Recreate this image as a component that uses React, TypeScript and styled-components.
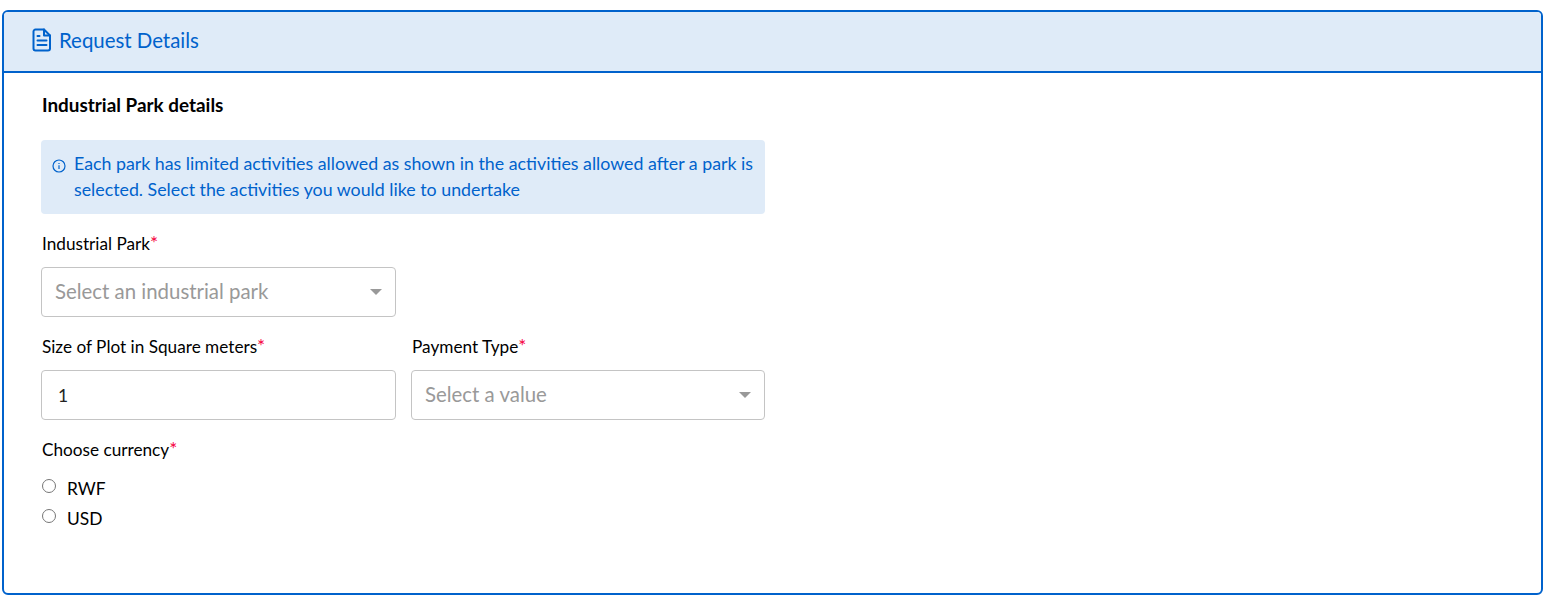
import React from 'react';
import styled, { createGlobalStyle } from 'styled-components';

const GlobalStyle = createGlobalStyle`
  html, body {
    margin: 0;
    padding: 0;
    background: #fff;
    font-family: 'Lato', 'Noto Sans', sans-serif;
    color: #000;
  }
`;

const Page = styled.div`
  padding: 10px 6px 3px 2px;
`;

const Card = styled.section`
  height: 585px;
  box-sizing: border-box;
  border: 2px solid #0062cc;
  border-radius: 6px;
  overflow: hidden;
`;

const CardHeader = styled.header`
  display: flex;
  align-items: center;
  gap: 7px;
  height: 61px;
  box-sizing: border-box;
  padding: 0 0 4px 28px;
  background: #dfebf8;
  border-bottom: 2px solid #0062cc;
  color: #0062cc;
  font-size: 20.4px;
`;

const CardBody = styled.div`
  width: 724px;
  padding: 21px 0 0 37px;
`;

const SectionTitle = styled.h3`
  margin: 0 0 24px;
  font-size: 18.9px;
  line-height: 22px;
  font-weight: 700;
  padding-left: 1px;
`;

const Notice = styled.div`
  display: flex;
  gap: 8px;
  box-sizing: border-box;
  height: 74px;
  padding: 10px 10px;
  background: #dfebf8;
  border-radius: 4px;
  color: #0062cc;
  font-size: 17.8px;
  line-height: 26px;
`;

const NoticeIcon = styled.svg`
  flex: none;
  width: 14px;
  height: 14px;
  margin: 9px 0 0 1px;
`;

const Row = styled.div`
  display: grid;
  grid-template-columns: 355px 354px;
  gap: 15px;
`;

const Field = styled.div`
  padding-top: 18px;
`;

const Label = styled.label`
  display: block;
  margin-bottom: 11px;
  padding-left: 1px;
  font-size: 17.2px;
  line-height: 24px;
`;

const Required = styled.span`
  color: #f5003d;
  font-size: 19px;
  line-height: 1;
`;

const SelectBox = styled.div<{ $width?: number }>`
  display: flex;
  align-items: center;
  justify-content: space-between;
  box-sizing: border-box;
  width: ${({ $width }) => ($width ? `${$width}px` : '100%')};
  height: 50px;
  padding: 0 13px 2px 13px;
  border: 1px solid #c4c4c4;
  border-radius: 4px;
  color: #999;
  font-size: 20.4px;
`;

const Caret = styled.span`
  width: 0;
  height: 0;
  margin-top: 2px;
  border-left: 6.5px solid transparent;
  border-right: 6.5px solid transparent;
  border-top: 6.5px solid #999;
`;

const TextInput = styled.input`
  display: block;
  box-sizing: border-box;
  width: 100%;
  height: 50px;
  padding: 0 16px;
  border: 1px solid #c4c4c4;
  border-radius: 4px;
  font-family: inherit;
  font-size: 17.4px;
  color: #222;
`;

const RadioGroup = styled.div`
  display: flex;
  flex-direction: column;
  gap: 6px;
  padding-top: 3px;
`;

const RadioLabel = styled.label`
  display: flex;
  align-items: center;
  gap: 11px;
  height: 24px;
  padding-left: 1px;
  font-size: 17.4px;
`;

const Radio = styled.input`
  width: 14px;
  height: 14px;
  margin: -5px 0 0 0;
`;

export default function App() {
  return (
    <>
      <GlobalStyle />
      <Page>
        <Card>
          <CardHeader>
            <svg width="20" height="24" viewBox="0 0 20 24" fill="none" stroke="#0062cc" strokeWidth="2" strokeLinejoin="round" strokeLinecap="round">
              <path d="M3.500 1.500h8.500l6 6v13a2 2 0 0 1-2 2h-12.500a2 2 0 0 1-2-2v-17a2 2 0 0 1 2-2z" />
              <path d="M12 1.500v6h6" />
              <path d="M5.500 8h2M5.500 12.500h9M5.500 17h9" />
            </svg>
            Request Details
          </CardHeader>
          <CardBody>
            <SectionTitle>Industrial Park details</SectionTitle>
            <Notice>
              <NoticeIcon viewBox="0 0 14 14" fill="none" stroke="#0062cc" strokeWidth="1.200">
                <circle cx="7" cy="7" r="6" />
                <path d="M7 6.300v3.600M7 4v1" />
              </NoticeIcon>
              <span>
                Each park has limited activities allowed as shown in the activities allowed after a park is selected. Select the activities you would like to undertake
              </span>
            </Notice>
            <Field>
              <Label>Industrial Park<Required>*</Required></Label>
              <SelectBox $width={355}>
                Select an industrial park
                <Caret />
              </SelectBox>
            </Field>
            <Row>
              <Field>
                <Label>Size of Plot in Square meters<Required>*</Required></Label>
                <TextInput defaultValue="1" />
              </Field>
              <Field>
                <Label>Payment Type<Required>*</Required></Label>
                <SelectBox>
                  Select a value
                  <Caret />
                </SelectBox>
              </Field>
            </Row>
            <Field>
              <Label>Choose currency<Required>*</Required></Label>
              <RadioGroup>
                <RadioLabel><Radio type="radio" name="currency" />RWF</RadioLabel>
                <RadioLabel><Radio type="radio" name="currency" />USD</RadioLabel>
              </RadioGroup>
            </Field>
          </CardBody>
        </Card>
      </Page>
    </>
  );
}
